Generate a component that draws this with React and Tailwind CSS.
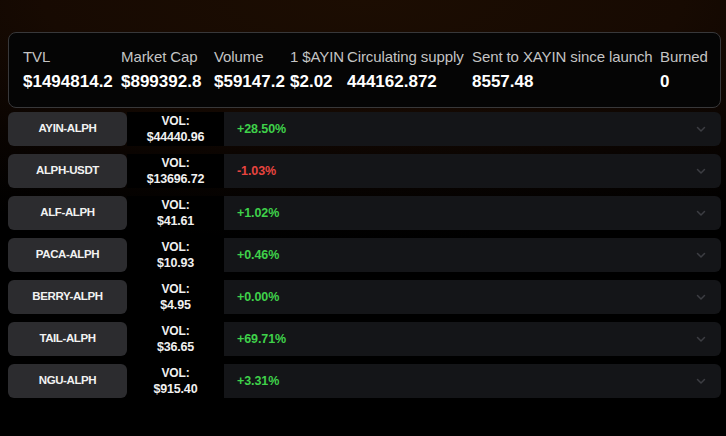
import React from "react";

const stats = [
    { label: "TVL", value: "$1494814.2", width: "w-[98px]" },
    { label: "Market Cap", value: "$899392.8", width: "w-[93px]" },
    { label: "Volume", value: "$59147.2", width: "w-[76px]" },
    { label: "1 $AYIN", value: "$2.02", width: "w-[57px]" },
    { label: "Circulating supply", value: "444162.872", width: "w-[125px]" },
    { label: "Sent to XAYIN since launch", value: "8557.48", width: "w-[188px]" },
    { label: "Burned", value: "0", width: "w-[50px]" },
];

const pairs = [
    { name: "AYIN-ALPH", vol: "$44440.96", change: "+28.50%", up: true },
    { name: "ALPH-USDT", vol: "$13696.72", change: "-1.03%", up: false },
    { name: "ALF-ALPH", vol: "$41.61", change: "+1.02%", up: true },
    { name: "PACA-ALPH", vol: "$10.93", change: "+0.46%", up: true },
    { name: "BERRY-ALPH", vol: "$4.95", change: "+0.00%", up: true },
    { name: "TAIL-ALPH", vol: "$36.65", change: "+69.71%", up: true },
    { name: "NGU-ALPH", vol: "$915.40", change: "+3.31%", up: true },
];

const Chevron = () => (
    <svg className="w-3 h-3" fill="none" stroke="#3c3d42" strokeWidth={1.5} viewBox="0 0 12 12">
        <path strokeLinecap="round" strokeLinejoin="round" d="M2.5 4.5l3.5 3.5 3.5-3.5" />
    </svg>
);

const App = () => {
    return (
        <div
            className="min-h-screen w-full bg-black bg-[radial-gradient(ellipse_110%_55%_at_50%_0%,#1c0d02_0%,#170a02_40%,#0a0401_70%,#000_100%)] pl-2 pr-[5px] pt-8 text-white"
            style={{ fontFamily: '"Liberation Sans", Arial, sans-serif' }}
        >
            {/* stats card */}
            <div className="flex h-[76px] rounded-lg border border-[#38383a] bg-[#050505] pl-[14px] pt-[14px]">
                {stats.map((s) => (
                    <div key={s.label} className={`flex shrink-0 flex-col ${s.width}`}>
                        <span className="whitespace-nowrap text-[15px] leading-[20px] tracking-[-0.1px] text-[#c4c4c4]">
                            {s.label}
                        </span>
                        <span className="mt-[4px] whitespace-nowrap text-[17px] leading-[22px] font-bold text-white">
                            {s.value}
                        </span>
                    </div>
                ))}
            </div>

            {/* pairs */}
            <div className="mt-[4px] flex flex-col gap-2">
                {pairs.map((p) => (
                    <div key={p.name} className="flex h-[34px] items-stretch">
                        <div className="flex w-[119px] items-center justify-center rounded-md bg-[#2c2c2f] text-[11.5px] font-bold tracking-[-0.4px] text-[#f2f2f2]">
                            {p.name}
                        </div>
                        <div className="flex w-[97px] flex-col items-center justify-center bg-black text-[12.5px] font-bold leading-[16px] tracking-[-0.2px] text-[#f0f0f0]">
                            <span className="text-[12px]">VOL:</span>
                            <span>{p.vol}</span>
                        </div>
                        <div className="flex flex-1 items-center justify-between rounded-r-md bg-[#141518] pl-[13px] pr-[14px]">
                            <span
                                className={
                                    p.up
                                        ? "text-[12.5px] font-bold tracking-[-0.1px] text-[#3fd14a]"
                                        : "text-[12.5px] font-bold tracking-[-0.1px] text-[#e8443f]"
                                }
                            >
                                {p.change}
                            </span>
                            <Chevron />
                        </div>
                    </div>
                ))}
            </div>
        </div>
    );
};

export default App;
